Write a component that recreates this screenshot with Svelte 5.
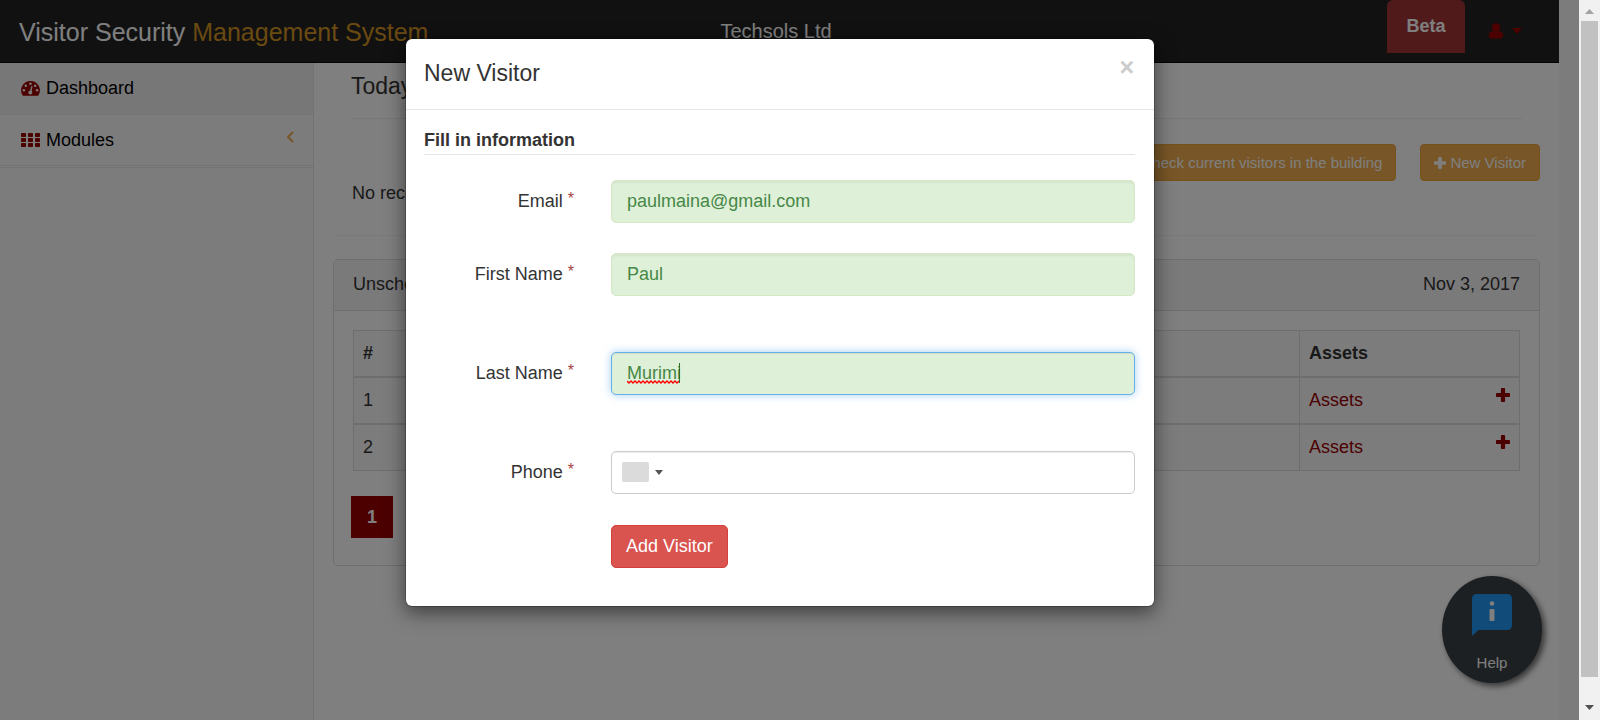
<script>
  let email = $state('paulmaina@gmail.com');
  let firstName = $state('Paul');
  let lastName = $state('Murimi');
  let phone = $state('');
  const rows = [1, 2];
</script>

{#snippet plus(size)}
  <svg class="plus" width={size} height={size} viewBox="0 0 14 14" aria-hidden="true">
    <path d="M5.800 0h2.400q.9 0 .9.9v4h4q.9 0 .9.9v2.400q0 .9-.9.9h-4v4q0 .9-.9.9H5.800q-.9 0-.9-.9v-4h-4q-.9 0-.9-.9V5.800q0-.9.9-.9h4v-4q0-.9.9-.9z" />
  </svg>
{/snippet}

<div class="window">
  <div class="page">
    <div class="site">
      <header class="topbar">
        <a class="brand" href="#home">Visitor Security <span>Management System</span></a>
        <div class="company">Techsols Ltd</div>
        <div class="account">
          <button class="beta" type="button">Beta</button>
          <button class="user" type="button" aria-label="Account">
            <svg width="14" height="16" viewBox="0 0 14 16" aria-hidden="true">
              <circle cx="7" cy="4.300" r="4.200" />
              <path d="M2.400 8.300C.6 8.700 0 10.500 0 12.700 0 14.400.9 15.400 2.400 15.400h9.200c1.500 0 2.400-1 2.400-2.700 0-2.200-.6-4-2.400-4.400C10.400 9.100 8.800 9.400 7 9.400S3.600 9.100 2.400 8.300z" />
              <rect x="2.800" y="8.300" width="8.400" height="4" />
            </svg>
            <svg width="10" height="6" viewBox="0 0 10 6" aria-hidden="true"><path d="M0 0h10L5 6z" /></svg>
          </button>
        </div>
      </header>

      <div class="body">
        <nav class="sidebar">
          <a class="item active" href="#dashboard">
            <svg width="19" height="15" viewBox="0 0 19 15" aria-hidden="true">
              <path d="M9.500 0A9.300 9.300 0 0 0 1.600 14.300q.3.500.8.500h14.200q.5 0 .8-.5A9.300 9.300 0 0 0 9.500 0z" />
              <g class="hole">
                <circle cx="9.500" cy="2.700" r="1.300" /><circle cx="4.800" cy="4.700" r="1.300" />
                <circle cx="14.200" cy="4.700" r="1.300" /><circle cx="2.900" cy="9.300" r="1.300" />
                <circle cx="16.100" cy="9.300" r="1.300" /><circle cx="9.300" cy="11.600" r="2" />
                <path d="M10.300 5l1.300.3-1.200 5.800-1.600-.3z" />
              </g>
            </svg>
            Dashboard
          </a>
          <a class="item modules" href="#modules">
            <svg width="19" height="15" viewBox="0 0 19 15" aria-hidden="true">
              {#each [0, 5, 10] as y}
                {#each [0, 7, 14] as x}
                  <rect {x} {y} width="5" height="4" rx="0.800" />
                {/each}
              {/each}
            </svg>
            Modules
            <svg class="chevron" width="7" height="12" viewBox="0 0 7 12" aria-hidden="true"><path d="M6 1L1 6l5 5" /></svg>
          </a>
        </nav>

        <main class="content">
          <h1>Today</h1>
          <section class="summary">
            <div class="actions">
              <button class="btn" type="button">Check current visitors in the building</button>
              <button class="btn" type="button">{@render plus(12)} New Visitor</button>
            </div>
            <p>No records</p>
          </section>

          <section class="panel">
            <div class="panel-head"><span>Unscheduled</span><span>Nov 3, 2017</span></div>
            <div class="panel-body">
              <table>
                <thead>
                  <tr><th class="num">#</th><th></th><th class="assets">Assets</th></tr>
                </thead>
                <tbody>
                  {#each rows as row}
                    <tr>
                      <td>{row}</td>
                      <td></td>
                      <td>
                        <div class="cell">
                          <a href="#assets">Assets</a>
                          <button type="button" aria-label="Add asset">{@render plus(14)}</button>
                        </div>
                      </td>
                    </tr>
                  {/each}
                </tbody>
              </table>
              <button class="current" type="button">1</button>
            </div>
          </section>
        </main>
      </div>
    </div>

    <button class="help" type="button">
      <svg width="40" height="42" viewBox="0 0 40 42" aria-hidden="true">
        <path class="bubble" d="M5 0h30q5 0 5 5v26q0 5-5 5H6.500L0 42V5q0-5 5-5z" />
        <circle class="mark" cx="20" cy="9.500" r="2.300" />
        <rect class="mark" x="17.500" y="15" width="5" height="12" rx="1" />
      </svg>
      Help
    </button>

    <div class="backdrop">
      <div class="modal" role="dialog" aria-modal="true" aria-labelledby="modal-title">
        <div class="modal-head">
          <h2 id="modal-title">New Visitor</h2>
          <button class="close" type="button" aria-label="Close">×</button>
        </div>
        <form class="modal-body">
          <h3>Fill in information</h3>
          <div class="group">
            <label for="email">Email <sup>*</sup></label>
            <input id="email" class="valid" type="text" bind:value={email} />
          </div>
          <div class="group tall">
            <label for="first">First Name <sup>*</sup></label>
            <input id="first" class="valid" type="text" bind:value={firstName} />
          </div>
          <div class="group tall">
            <label for="last">Last Name <sup>*</sup></label>
            <div class="field">
              <input id="last" class="valid focused" type="text" spellcheck="false" bind:value={lastName} />
              <div class="typed" aria-hidden="true">
                <svg width="52" height="4" viewBox="0 0 52 4">
                  <path d="M0 1l2 2 2-2 2 2 2-2 2 2 2-2 2 2 2-2 2 2 2-2 2 2 2-2 2 2 2-2 2 2 2-2 2 2 2-2 2 2 2-2 2 2 2-2 2 2 2-2 2 2 2-2" />
                </svg>
                <i></i>
              </div>
            </div>
          </div>
          <div class="group">
            <label for="phone">Phone <sup>*</sup></label>
            <div class="field">
              <input id="phone" type="tel" bind:value={phone} />
              <button class="country" type="button" aria-label="Country">
                <span></span>
                <svg width="8" height="5" viewBox="0 0 8 5" aria-hidden="true"><path d="M0 0h8L4 5z" /></svg>
              </button>
            </div>
          </div>
          <div class="group">
            <button class="submit" type="submit">Add Visitor</button>
          </div>
        </form>
      </div>
    </div>
  </div>

  <div class="scrollbar" aria-hidden="true">
    <svg class="up" width="9" height="5" viewBox="0 0 9 5"><path d="M4.500 0L9 5H0z" /></svg>
    <div class="track"><div class="thumb"></div></div>
    <svg class="down" width="9" height="5" viewBox="0 0 9 5"><path d="M0 0h9L4.500 5z" /></svg>
  </div>
</div>

<style>
  :global(body) { margin: 0; }
  * { box-sizing: border-box; }
  .window {
    display: flex;
    height: 100vh;
    overflow: hidden;
    font: 18px/25px "Liberation Sans", Arial, sans-serif;
    color: #333;
  }
  button, input { font: inherit; }
  button { margin: 0; padding: 0; border: 0; background: none; cursor: pointer; }
  a { text-decoration: none; }
  svg { display: block; flex: none; }
  h1, h2, h3, p { margin: 0; }

  .page { position: relative; flex: 1; min-width: 0; display: flex; background: #f8f8f8; padding-right: 20px; }
  .site { flex: 1; min-width: 0; display: flex; flex-direction: column; }
  .topbar {
    display: grid;
    grid-template-columns: 1fr auto 1fr;
    height: 63px;
    background: #222;
    border-bottom: 1px solid #080808;
  }
  .brand { padding: 19px 0 0 19px; font-size: 25px; line-height: 26px; color: #fff; white-space: nowrap; }
  .brand span { color: #d49422; }
  .company { padding: 19px 7px 0 0; font-size: 20px; color: #fff; }
  .account { display: flex; justify-content: flex-end; align-items: flex-start; gap: 24px; padding-right: 37px; }
  .beta { height: 53px; width: 78px; background: #a03434; border-radius: 6px 6px 0 0; color: #fff; font-weight: bold; }
  .user { display: flex; align-items: center; gap: 9px; height: 62px; fill: #900; }

  .body { flex: 1; display: flex; min-height: 0; }
  .sidebar { flex: none; width: 314px; border-right: 1px solid #e7e7e7; background: #f8f8f8; }
  .item {
    display: flex;
    align-items: center;
    gap: 6px;
    height: 52px;
    padding: 0 19px 0 21px;
    border-bottom: 1px solid #e7e7e7;
    color: #000;
    fill: #900;
  }
  .item.active { background: #eee; }
  .item.modules { height: 53px; border-bottom: 3px double #e7e7e7; }
  .hole { fill: #eee; }
  .chevron { margin: 0 0 6px auto; fill: none; stroke: #f0ad4e; stroke-width: 2; }

  .content { flex: 1; min-width: 0; padding: 0 19px; background: #fff; }
  h1 { margin: 0 18px; padding: 11px 0 19px; font-size: 23px; font-weight: normal; border-bottom: 1px solid #eee; }
  .summary { padding-top: 25px; height: 116px; border-radius: 5px; box-shadow: 0 1px 1px rgba(0, 0, 0, 0.05); }
  .actions { display: flex; justify-content: flex-end; gap: 24px; }
  .btn {
    display: flex;
    align-items: center;
    gap: 4px;
    height: 37px;
    padding: 0 13px;
    border: 1px solid #eea236;
    border-radius: 4px;
    background: #f0ad4e;
    color: #fff;
    fill: #fff;
    font-size: 15px;
  }
  .summary p { padding-left: 19px; }
  .panel { margin-top: 24px; border: 1px solid #ddd; border-radius: 5px; }
  .panel-head {
    display: flex;
    justify-content: space-between;
    padding: 12px 19px 13px;
    border-bottom: 1px solid #ddd;
    border-radius: 4px 4px 0 0;
    background: #f5f5f5;
  }
  .panel-body { padding: 19px 19px 27px; }
  table { width: 100%; table-layout: fixed; border-collapse: collapse; background: #f9f9f9; border: 1px solid #ddd; }
  th, td { height: 47px; padding: 0 9px; border: 1px solid #ddd; border-top-width: 2px; text-align: left; }
  thead th { height: 46px; border-top-width: 1px; }
  .num { width: 8%; }
  .assets { width: 220px; }
  .cell { display: flex; justify-content: space-between; align-items: flex-start; }
  .cell a { color: #900; }
  .cell button { fill: #900; }
  .current { width: 42px; height: 42px; margin: 25px 0 0 -2px; background: #900; color: #fff; font-weight: bold; }

  .help {
    position: absolute;
    right: 37px;
    bottom: 37px;
    display: flex;
    flex-direction: column;
    align-items: center;
    gap: 14px;
    width: 100px;
    height: 107px;
    padding-top: 18px;
    border-radius: 50%;
    background: #384046;
    box-shadow: 3px 3px 6px rgba(0, 0, 0, 0.6);
    color: #fff;
    font-size: 15px;
  }
  .bubble { fill: #2196f3; }
  .mark { fill: #fff; }

  .backdrop {
    position: absolute;
    inset: 0;
    display: flex;
    justify-content: center;
    align-items: flex-start;
    padding: 38px 19px 0 0;
    background: rgba(0, 0, 0, 0.5);
  }
  .modal {
    width: 750px;
    border: 1px solid rgba(0, 0, 0, 0.2);
    border-radius: 7px;
    background: #fff;
    background-clip: padding-box;
    box-shadow: 0 6px 19px rgba(0, 0, 0, 0.5);
  }
  .modal-head { display: flex; justify-content: space-between; padding: 18px 20px 20px 18px; border-bottom: 1px solid #e5e5e5; }
  h2 { font-size: 23px; line-height: 32px; font-weight: normal; }
  .close { height: 20px; line-height: 20px; font-size: 25px; font-weight: bold; color: #ccc; }
  .modal-body { padding: 18px 19px 38px 18px; }
  h3 { margin-bottom: 25px; padding-bottom: 1px; font-size: 18px; border-bottom: 1px solid #e5e5e5; line-height: 25px; }
  .group { display: grid; grid-template-columns: 150px 1fr; column-gap: 37px; align-items: center; }
  .group + .group { margin-top: 30px; }
  .group.tall { padding-bottom: 26px; }
  .group:last-child { padding-top: 1px; }
  label { text-align: right; }
  sup { font-size: 16px; line-height: 0; vertical-align: 3px; color: #a94442; }
  input {
    display: block;
    width: 100%;
    height: 43px;
    padding: 0 15px;
    border: 1px solid #ccc;
    border-radius: 5px;
    box-shadow: inset 0 1px 1px rgba(0, 0, 0, 0.075);
    background: #fff;
    outline: 0;
  }
  input.valid { background: #dff0d8; border-color: #d6e9c6; color: #468847; box-shadow: inset 0 2px 2px rgba(0, 0, 0, 0.05); }
  input.focused { border-color: #66afe9; box-shadow: inset 0 1px 1px rgba(0, 0, 0, 0.075), 0 0 9px rgba(102, 175, 233, 0.6); }
  .field { position: relative; }
  .typed { position: absolute; left: 16px; top: 10px; display: flex; align-items: flex-end; height: 22px; pointer-events: none; }
  .typed path { fill: none; stroke: #f00; stroke-width: 1.400; }
  .typed i { width: 1px; height: 20px; margin-bottom: 1px; background: #2e6b30; }
  .country { position: absolute; left: 11px; top: 11px; display: flex; align-items: center; gap: 6px; height: 20px; fill: #555; }
  .country span { width: 27px; height: 20px; border-radius: 2px; background: #dbdbdb; }
  #phone { padding-left: 65px; }
  .submit {
    grid-column: 2;
    justify-self: start;
    height: 43px;
    padding: 0 14px;
    border: 1px solid #d43f3a;
    border-radius: 5px;
    background: #d9534f;
    color: #fff;
  }

  .scrollbar { flex: none; width: 21px; display: flex; flex-direction: column; align-items: center; padding: 9px 0 10px; background: #f1f1f1; }
  .track { flex: 1; width: 17px; margin: 7px 0 8px; }
  .thumb { height: 97%; background: #c1c1c1; }
  .up { fill: #a3a3a3; }
  .down { fill: #505050; }
</style>
